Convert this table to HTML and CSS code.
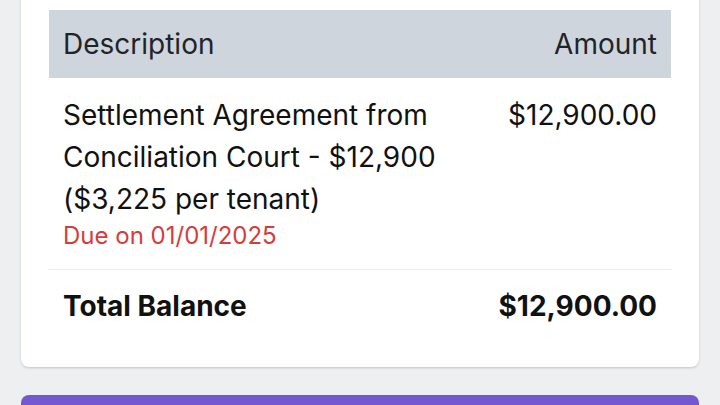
FILE: index.html
```html
<!DOCTYPE html>
<html lang="en">
<head>
<meta charset="utf-8">
<link rel="stylesheet" href="styles.css">
</head>
<body>
<div class="page">
  <div class="card">
    <div class="table">
      <div class="row head">
        <div class="desc">Description</div>
        <div class="amt">Amount</div>
      </div>
      <div class="row item">
        <div class="desc">
          <div class="text">Settlement Agreement from Conciliation Court - $12,900 ($3,225 per tenant)</div>
          <div class="due">Due on 01/01/2025</div>
        </div>
        <div class="amt">$12,900.00</div>
      </div>
      <div class="row total">
        <div class="desc">Total Balance</div>
        <div class="amt">$12,900.00</div>
      </div>
    </div>
  </div>
  <div class="button"></div>
</div>
</body>
</html>
```
FILE: styles.css
```css
html, body {
  margin: 0;
  padding: 0;
  background: #eeeff1;
  overflow: hidden;
}
body {
  font-family: Inter, "Noto Sans", sans-serif;
  color: #111;
}
.page {
  padding: 0 21px;
  display: flex;
  flex-direction: column;
  gap: 28px;
}
.card {
  margin-top: -18px;
  background: #fff;
  border-radius: 8px;
  box-shadow: 0 1px 3px rgba(0,0,0,0.12), 0 1px 2px rgba(0,0,0,0.06);
  padding: 28px 28px 24px;
}
.row {
  display: flex;
  justify-content: space-between;
  align-items: flex-start;
  padding: 0 14px;
  font-size: 28px;
  line-height: 42px;
}
.head {
  background: #cfd5dc;
  color: #1f2429;
  padding-top: 13px;
  padding-bottom: 13px;
}
.item {
  padding-top: 16px;
  padding-bottom: 17px;
  border-bottom: 1px solid #ececec;
}
.item .text {
  max-width: 380px;
}
.due {
  color: #d63c3c;
  font-size: 24px;
  line-height: 32px;
}
.total {
  font-weight: 700;
  padding-top: 15px;
  padding-bottom: 16px;
}
.button {
  height: 56px;
  background: #7358d1;
  border-radius: 8px;
}
```
